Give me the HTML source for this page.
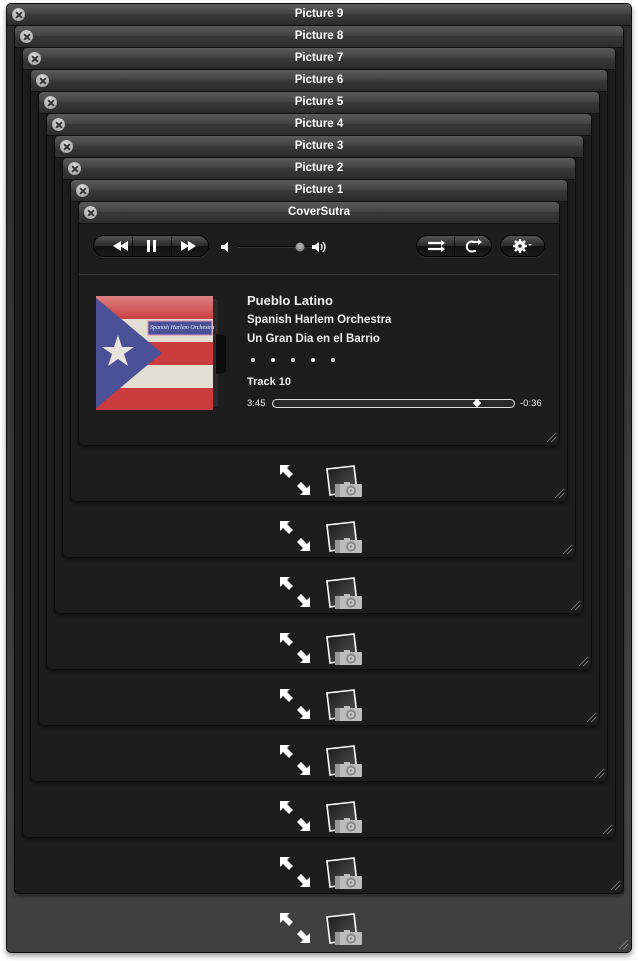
<!DOCTYPE html>
<html><head><meta charset="utf-8"><style>
*{margin:0;padding:0;box-sizing:border-box}
body{width:638px;height:961px;background:#fff;position:relative;overflow:hidden;font-family:"Liberation Sans",sans-serif}
.w{position:absolute;border-radius:5px;background:#1d1d1d;border:1px solid #0c0c0c;box-shadow:0 2px 4px rgba(0,0,0,.45)}
.w.outer{background:linear-gradient(#2e2e2e,#464646 85%,#3f3f3f);box-shadow:0 3px 6px rgba(0,0,0,.4)}
.t{position:absolute;left:0;right:0;top:0;height:22px;border-radius:4px 4px 0 0;background:linear-gradient(#5a5a5a,#444 45%,#383838 50%,#2c2c2c);border-bottom:1px solid #111;color:#fff;font-size:11.5px;font-weight:bold;text-align:center;line-height:21px}
.c{position:absolute;left:5px;top:4px;width:13px;height:13px;border-radius:50%;background:radial-gradient(circle at 50% 35%,#ddd,#999);}
.c:before,.c:after{content:"";position:absolute;left:2.5px;top:5.5px;width:8px;height:2px;background:#333;transform:rotate(45deg)}
.c:after{transform:rotate(-45deg)}
.grip{position:absolute;right:3px;bottom:3px;width:9px;height:9px;background:linear-gradient(135deg,transparent 45%,#888 46%,#888 52%,transparent 53%,transparent 70%,#888 71%,#888 77%,transparent 78%)}
.ic{position:absolute;width:82px;height:32px}
.txt{position:absolute;left:247px;color:#eee;font-weight:bold;font-size:12px}
.btn{position:absolute;height:22px;border-radius:11px;background:linear-gradient(#555,#2a2a2a 50%,#111 52%,#1a1a1a);border:1px solid #000;box-shadow:0 1px 0 #333}
.dot{position:absolute;top:358px;width:4px;height:4px;border-radius:50%;background:#eee}
</style></head><body>

<div class="w outer" style="left:6px;top:3px;width:626px;height:950px"><div class="t"><div class="c"></div>Picture 9</div><div class="grip"></div></div>
<div class="w" style="left:14px;top:25px;width:610px;height:869px"><div class="t"><div class="c"></div>Picture 8</div><div class="grip"></div></div>
<div class="w" style="left:22px;top:47px;width:594px;height:791px"><div class="t"><div class="c"></div>Picture 7</div><div class="grip"></div></div>
<div class="w" style="left:30px;top:69px;width:578px;height:713px"><div class="t"><div class="c"></div>Picture 6</div><div class="grip"></div></div>
<div class="w" style="left:38px;top:91px;width:562px;height:635px"><div class="t"><div class="c"></div>Picture 5</div><div class="grip"></div></div>
<div class="w" style="left:46px;top:113px;width:546px;height:557px"><div class="t"><div class="c"></div>Picture 4</div><div class="grip"></div></div>
<div class="w" style="left:54px;top:135px;width:530px;height:479px"><div class="t"><div class="c"></div>Picture 3</div><div class="grip"></div></div>
<div class="w" style="left:62px;top:157px;width:514px;height:401px"><div class="t"><div class="c"></div>Picture 2</div><div class="grip"></div></div>
<div class="w" style="left:70px;top:179px;width:498px;height:323px"><div class="t"><div class="c"></div>Picture 1</div><div class="grip"></div></div>
<div class="w" style="left:78px;top:201px;width:482px;height:245px"><div class="t"><div class="c"></div>CoverSutra</div><div class="grip"></div>
<div style="position:absolute;left:0;right:0;top:72px;height:1px;background:#3a3a3a"></div>
</div>

<!-- controls -->
<div class="btn" style="left:93px;top:235px;width:116px"></div>
<div style="position:absolute;left:132px;top:237px;width:1px;height:19px;background:#000"></div>
<div style="position:absolute;left:171px;top:237px;width:1px;height:19px;background:#000"></div>
<svg style="position:absolute;left:93px;top:235px" width="116" height="22">
<path d="M20 11l8-5v10zM27 11l8-5v10z" fill="#fff"/>
<rect x="54" y="5" width="3" height="12" fill="#fff"/><rect x="60" y="5" width="3" height="12" fill="#fff"/>
<path d="M88 6l8 5-8 5zM95 6l8 5-8 5z" fill="#fff"/>
</svg>
<svg style="position:absolute;left:218px;top:238px" width="112" height="18">
<path d="M3 7h3l4-3v10l-4-3H3z" fill="#fff"/>
<rect x="20" y="8" width="82" height="2" rx="1" fill="#000"/><rect x="20" y="9" width="82" height="1" fill="#333"/>
<circle cx="82" cy="9" r="4.5" fill="#888"/><circle cx="82" cy="8" r="3" fill="#aaa"/>
<path d="M94 7h3l4-3v10l-4-3h-3z" fill="#fff"/>
<path d="M103 6q2 3 0 6M105 4q4 5 0 10" stroke="#fff" stroke-width="1.3" fill="none"/>
</svg>
<div class="btn" style="left:416px;top:235px;width:76px"></div>
<div style="position:absolute;left:454px;top:237px;width:1px;height:19px;background:#000"></div>
<div class="btn" style="left:500px;top:235px;width:45px"></div>
<svg style="position:absolute;left:416px;top:235px" width="130" height="22">
<path d="M12 8h15M12 14h15" stroke="#fff" stroke-width="2.2"/><path d="M25 5l4 3-4 3zM25 11l4 3-4 3z" fill="#fff"/>
<path d="M58 7a5 5 0 1 0 0 9h2" stroke="#fff" stroke-width="2" fill="none"/><path d="M56 7h8" stroke="#fff" stroke-width="2"/><path d="M62 4l4 3-4 3z" fill="#fff"/>
<circle cx="104" cy="11" r="5" fill="#fff"/>
<path d="M104 4v14M97 11h14M99 6l10 10M109 6l-10 10" stroke="#fff" stroke-width="2.5"/>
<circle cx="104" cy="11" r="1.8" fill="#222"/>
<path d="M112 9h4l-2 2z" fill="#fff"/>
</svg>

<!-- album -->
<svg style="position:absolute;left:94px;top:294px" width="132" height="120">
<rect x="110" y="3" width="14" height="112" rx="2" fill="#1a1a1a"/>
<rect x="116" y="5" width="8" height="108" rx="2" fill="#2a2a2a"/>
<path d="M122 40a20 20 0 0 1 0 40" fill="#0c0c0c"/>
<rect x="2" y="2" width="117" height="114" fill="#c93b3c"/>
<rect x="2" y="25" width="117" height="23" fill="#e4ddd2"/>
<rect x="2" y="71" width="117" height="23" fill="#e4ddd2"/>
<rect x="2" y="2" width="117" height="25" fill="url(#g)"/>
<path d="M2 4L68 59L2 114z" fill="#4a5196"/>
<path d="M24 41l4 12h12l-10 7 4 12-10-7-10 7 4-12-10-7h12z" fill="#e8e4dc"/>
<rect x="54" y="27" width="64" height="14" fill="#4a5196" stroke="#d8a" stroke-width="1"/>
<text x="56" y="35" font-size="6" font-style="italic" fill="#eee" font-family="Liberation Serif,serif">Spanish Harlem Orchestra</text>
<defs><linearGradient id="g" x1="0" y1="0" x2="0" y2="1"><stop offset="0" stop-color="#fff" stop-opacity=".35"/><stop offset="1" stop-color="#fff" stop-opacity="0"/></linearGradient></defs>
</svg>

<div class="txt" style="top:293px;font-size:13px">Pueblo Latino</div>
<div class="txt" style="top:314px;font-size:11.5px">Spanish Harlem Orchestra</div>
<div class="txt" style="top:333px;font-size:11.5px">Un Gran Dia en el Barrio</div>
<div class="dot" style="left:251px"></div><div class="dot" style="left:271px"></div><div class="dot" style="left:291px"></div><div class="dot" style="left:311px"></div><div class="dot" style="left:331px"></div>
<div class="txt" style="top:376px;font-size:11px">Track 10</div>
<div class="txt" style="top:398px;font-size:9.5px;font-weight:normal">3:45</div>
<div style="position:absolute;left:272px;top:399px;width:243px;height:9px;border:1px solid #ddd;border-radius:5px;background:#2a2a2a"></div>
<div style="position:absolute;left:474px;top:400px;width:6px;height:6px;background:#fff;transform:rotate(45deg)"></div>
<div class="txt" style="left:520px;top:398px;font-size:9.5px;font-weight:normal">-0:36</div>

<!-- icons -->
<svg width="0" height="0" style="position:absolute"><defs>
<linearGradient id="pg" x1="0" y1="0" x2="1" y2="1"><stop offset="0" stop-color="#1a1a1a"/><stop offset="1" stop-color="#555"/></linearGradient>
<g id="ico">
<path d="M0 0h10l-3 3 6 6-4 4-6-6-3 3z" fill="#fff"/>
<path d="M30 30h-10l3-3-6-6 4-4 6 6 3-3z" fill="#fff"/>
<path d="M47 4L74 1L77 26L50 30z" fill="url(#pg)" stroke="#fff" stroke-width="1.6"/>
<rect x="55" y="19" width="27" height="13" rx="1" fill="#bbb"/>
<rect x="55" y="19" width="5" height="13" fill="#999"/>
<rect x="64" y="17" width="6" height="3" fill="#bbb"/>
<circle cx="71" cy="25.5" r="5" fill="#888"/><circle cx="71" cy="25.5" r="3" fill="#ccc"/><circle cx="71" cy="25.5" r="1.2" fill="#777"/>
</g></defs></svg>
<svg class="ic" style="left:280px;top:465px"><use href="#ico"/></svg>
<svg class="ic" style="left:280px;top:521px"><use href="#ico"/></svg>
<svg class="ic" style="left:280px;top:577px"><use href="#ico"/></svg>
<svg class="ic" style="left:280px;top:633px"><use href="#ico"/></svg>
<svg class="ic" style="left:280px;top:689px"><use href="#ico"/></svg>
<svg class="ic" style="left:280px;top:745px"><use href="#ico"/></svg>
<svg class="ic" style="left:280px;top:801px"><use href="#ico"/></svg>
<svg class="ic" style="left:280px;top:857px"><use href="#ico"/></svg>
<svg class="ic" style="left:280px;top:913px"><use href="#ico"/></svg>
</body></html>
